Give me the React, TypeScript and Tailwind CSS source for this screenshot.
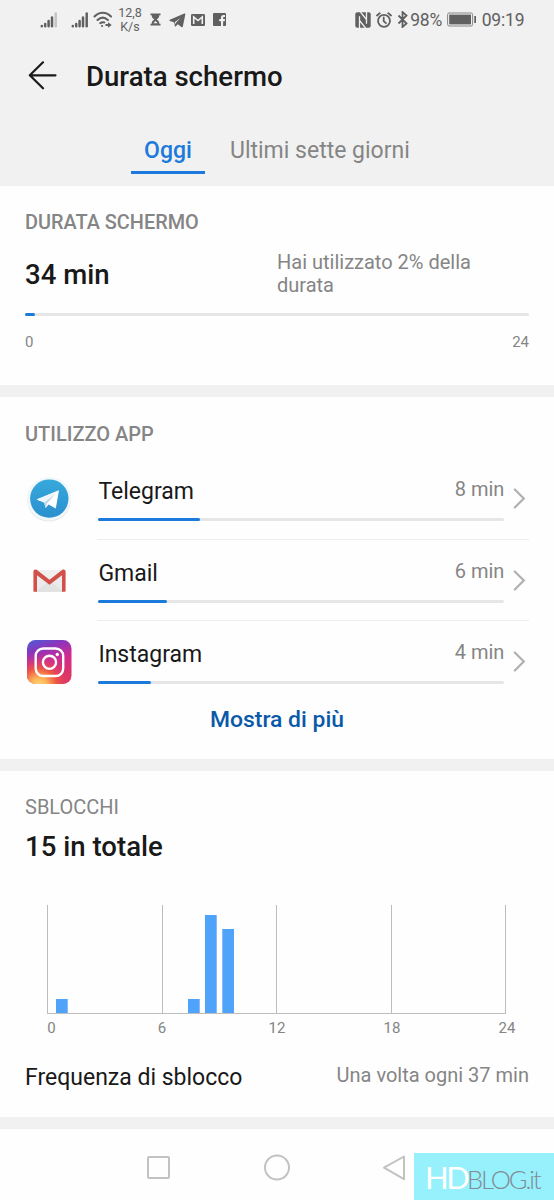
import React from 'react';

interface AppUsage {
  name: string;
  minutes: number;
  percent: number;
  icon: React.ReactNode;
}

interface UnlockBar {
  x: number;
  height: number;
}

const TelegramIcon = () => (
  <svg width="46" height="46" viewBox="0 0 46 46">
    <defs>
      <linearGradient id="tg" x1="0" y1="0" x2="0" y2="1">
        <stop offset="0" stopColor="#37a9dc" />
        <stop offset="1" stopColor="#2b8fce" />
      </linearGradient>
    </defs>
    <circle cx="23" cy="23.6" r="22" fill="#e6eaed" />
    <circle cx="23" cy="22.8" r="21.7" fill="#f2f7fa" />
    <circle cx="23.3" cy="22.6" r="19.2" fill="url(#tg)" />
    <path d="M10.6 23.4 33 14.2 29.8 32.6 22.6 28.4 19.6 32 18.2 26.6Z" fill="#fff" />
    <path d="M10.6 23.4 33 14.2 18.2 26.6Z" fill="#eef5fb" />
    <path d="M18.2 26.6 29.5 17.8 21 27.4 19.6 32Z" fill="#c3d5e6" />
  </svg>
);

const GmailIcon = () => (
  <svg width="46" height="46" viewBox="0 0 46 46">
    <path d="M9 12h29v22H9z" fill="#ebebeb" />
    <path d="M9 34 23.5 23 38 34z" fill="#e2e2e2" />
    <path d="M9 12h29L23.5 24z" fill="#f0efef" />
    <path d="M8 13.500v20.300h3V17.200l12.500 9.500L36 17.200v16.600h2.600c.6 0 1-.4 1-1V14c0-2.200-2-3-3.600-1.900l-12.500 9.700L11 12.100C9.400 11 7.400 11.800 7.400 14v18.800c0 .6.4 1 1 1z" fill="#d2504a" />
  </svg>
);

const InstagramIcon = () => (
  <svg width="46" height="46" viewBox="0 0 46 46">
    <defs>
      <linearGradient id="igBase" x1="0" y1="0" x2="0.35" y2="1">
        <stop offset="0" stopColor="#4a5fd7" />
        <stop offset="0.28" stopColor="#8a35bd" />
        <stop offset="0.6" stopColor="#cf2c91" />
        <stop offset="1" stopColor="#dd3563" />
      </linearGradient>
      <radialGradient id="igGlow" cx="0.27" cy="1.05" r="0.75">
        <stop offset="0" stopColor="#ffdc80" />
        <stop offset="0.25" stopColor="#fdb457" />
        <stop offset="0.55" stopColor="#f0583f" stopOpacity="0.9" />
        <stop offset="1" stopColor="#d92e7f" stopOpacity="0" />
      </radialGradient>
    </defs>
    <rect x="1" y="1" width="44.500" height="44" rx="8.500" fill="url(#igBase)" />
    <rect x="1" y="1" width="44.500" height="44" rx="8.500" fill="url(#igGlow)" />
    <rect x="9.700" y="9.500" width="27.500" height="27.500" rx="7.500" fill="none" stroke="#fff" strokeWidth="2.400" />
    <circle cx="23.500" cy="23.300" r="6.600" fill="none" stroke="#fff" strokeWidth="2.400" />
    <circle cx="31.300" cy="15.500" r="1.700" fill="#fff" />
  </svg>
);

const apps: AppUsage[] = [
  { name: 'Telegram', minutes: 8, percent: 25, icon: <TelegramIcon /> },
  { name: 'Gmail', minutes: 6, percent: 17, icon: <GmailIcon /> },
  { name: 'Instagram', minutes: 4, percent: 13, icon: <InstagramIcon /> },
];

const unlocks: UnlockBar[] = [
  { x: 9, height: 14 },
  { x: 141, height: 14 },
  { x: 158, height: 98 },
  { x: 175.3, height: 84 },
];

const hours = [0, 6, 12, 18, 24];

const Signal: React.FC<{ weak?: boolean }> = ({ weak }) => (
  <svg className="mb-px" width="18" height="16" viewBox="0 0 18 16" fill="none" stroke="#606060" strokeWidth="2.5" strokeLinecap="round">
    <path d="M1.800 14v.2M5.200 12v2.200M8.600 9v5.200M12 5.500v8.700" />
    <path d="M15.700 1.500v12.700" stroke={weak ? '#c4c4c4' : '#606060'} />
  </svg>
);

const StatusBar = () => (
  <div className="flex h-10 items-center pl-10 text-[#606060]">
    <Signal weak />
    <div className="w-[13px]" />
    <Signal />
    <svg className="mb-[3px] ml-1" width="20" height="18" viewBox="0 0 20 18" fill="none" stroke="#606060" strokeWidth="2.1" strokeLinecap="round">
      <path d="M1.500 6.500C6.500 1.500 13 1.500 18 6.500M4.500 10c3.200-3 7.200-3 10.400 0M7.300 13.200c1.300-1 2.700-1.200 4-.8" />
      <path d="M9 16h.2M13.200 15h2.500" strokeWidth="1.900" />
      <path d="m15 12.200 3.700 2.800-3.700 2.700z" fill="#606060" stroke="none" />
    </svg>
    <div className="ml-[5px] w-6 text-center text-[12.500px] leading-[14px]">
      12,8
      <br />
      K/s
    </div>
    <svg className="mb-px ml-2" width="11" height="13" viewBox="0 0 11 13" fill="#606060">
      <path d="M.5.5h10v1.800H9.300c0 2.500-1.300 3.400-2.600 4.200 1.300.8 2.600 1.700 2.600 4.200h1.200v1.800H.5v-1.800h1.200c0-2.500 1.300-3.400 2.600-4.200C3 5.700 1.700 4.800 1.700 2.300H.5z" />
      <path d="M3.300 10.300 5.500 8l2.200 2.300z" fill="#f1f1f1" />
    </svg>
    <svg className="ml-2" width="17" height="15" viewBox="0 0 17 15" fill="#606060">
      <path d="M.8 6.800 15.300.5c.8-.3 1.200.1 1 .9l-2.400 11.900c-.2.900-.8 1.100-1.500.6L8.800 11.200l-1.900 2.100c-.5.500-1 .3-1.100-.4L5.300 9.400 1 8C.3 7.700.2 7.300.8 6.800z" />
      <path d="m5.900 9 5.600-4.100-4.600 4.900-.5 1.600z" fill="#f1f1f1" />
    </svg>
    <svg className="ml-[5px]" width="14" height="12" viewBox="0 0 14 12">
      <rect width="14" height="12" rx="1.200" fill="#606060" />
      <path d="M2.700 10V3L7 6.500 11.300 3v7" fill="none" stroke="#f1f1f1" strokeWidth="1.600" />
    </svg>
    <svg className="mb-px ml-2" width="13" height="13" viewBox="0 0 13 13">
      <rect width="13" height="13" rx="1" fill="#606060" />
      <path d="M8 13V8.200H6.300V6.100H8V4.500c0-1.600.9-2.500 2.400-2.500H12v2h-1c-.6 0-.9.300-.9.800v1.300H12l-.3 2.100h-1.600V13z" fill="#f1f1f1" />
    </svg>

    <svg className="mb-px ml-auto" width="16" height="16" viewBox="0 0 16 16">
      <rect x=".3" y=".3" width="15.400" height="15.400" rx="2" fill="#606060" />
      <path d="M4.500 16V4.200M11.500 0v11.800" stroke="#f1f1f1" strokeWidth="1.300" />
      <path d="m4.500 8.500 6 7.500M5.500 0l6 7.500" fill="none" stroke="#f1f1f1" strokeWidth="1.300" />
    </svg>
    <svg className="mb-px ml-[5px]" width="16" height="16" viewBox="0 0 16 16" fill="none" stroke="#606060" strokeWidth="1.800" strokeLinecap="round">
      <circle cx="8" cy="8.800" r="6" />
      <path d="M7.700 5.500v3.700l2.200 2M1 3.500 3.700 1.200M15 3.500l-2.700-2.300" />
    </svg>
    <svg className="mb-px ml-[5px]" width="12" height="17" viewBox="0 0 12 17" fill="none" stroke="#606060" strokeWidth="1.800">
      <path d="m1.500 4.500 8 8-4 3.500V1l4 3.500-8 8" />
    </svg>
    <span className="ml-[1.500px] w-[32.500px] text-[17.500px] tracking-[-0.200px]">98%</span>
    <svg className="mb-px ml-1" width="30" height="15" viewBox="0 0 30 15">
      <rect x=".6" y="1" width="25" height="13" rx="1.500" fill="none" stroke="#858585" />
      <rect x="2.200" y="2.600" width="21.800" height="9.800" fill="#606060" />
      <path d="M27.300 4h1.700v7h-1.700z" fill="#606060" />
    </svg>
    <span className="mr-[29.500px] ml-[5px] text-[17.500px] tracking-[-0.150px]">09:19</span>
  </div>
);

const Header = () => (
  <header className="h-[146px] bg-[#f1f1f1]">
    <div className="flex h-[72px] items-center pl-7">
      <svg width="30" height="30" viewBox="0 0 30 30" fill="none" stroke="#1a1a1a" strokeWidth="2.2" strokeLinecap="round" strokeLinejoin="round">
        <path d="M27.500 14.300H2M15 1.300 1.800 14.300 15 27.300" />
      </svg>
      <h1 className="ml-7 pt-0.5 text-[27.600px] font-medium text-[#191919]">Durata schermo</h1>
    </div>
    <nav className="flex h-[62px] pl-[131px] text-[23px] leading-[78px]">
      <div className="h-[62px] w-[74px] border-b-[3px] border-[#1b7adb] text-center font-medium text-[#1b7adb]">Oggi</div>
      <div className="ml-[25px] text-[#858585]">Ultimi sette giorni</div>
    </nav>
  </header>
);

const UsageRow: React.FC<{ app: AppUsage; last: boolean }> = ({ app, last }) => (
  <div className="flex h-[81.500px]">
    <div className="w-[72.400px] pt-[18px] pl-px">{app.icon}</div>
    <div className={'flex flex-1 ' + (last ? '' : 'border-b border-[#ededed]')}>
      <div className="w-[407px] shrink-0 pl-px">
        <div className="flex justify-between">
          <span className="pt-[18px] text-[23px] leading-8 text-[#191919]">{app.name}</span>
          <span className="pt-[15px] text-[20px] leading-8 text-[#858585]">{app.minutes} min</span>
        </div>
        <div className="mt-2.5 h-[3px] rounded-full bg-[#e6e6e6]">
          <div className="h-[3px] rounded-full bg-[#1b7adb]" style={{ width: app.percent + '%' }} />
        </div>
      </div>
      <svg className="mt-[30px] ml-[8.500px] shrink-0" width="13" height="21" viewBox="0 0 13 21" fill="none" stroke="#b0b0b0" strokeWidth="2.2" strokeLinecap="round">
        <path d="m1.800 1.500 9 9-9 9" />
      </svg>
    </div>
  </div>
);

const UnlockChart = () => (
  <div className="mt-[42px] ml-[22px] w-[460px]">
    <svg className="block" width="460" height="109" viewBox="0 0 460 109">
      {unlocks.map((bar) => (
        <rect key={bar.x} x={bar.x} y={108 - bar.height} width="11.700" height={bar.height} fill="#4fa3fa" />
      ))}
      {hours.map((h) => (
        <path key={h} d={`M${0.5 + Math.round(h * 19.1)} 0v108`} stroke="#bdbdbd" />
      ))}
      <path d="M0 108.500h459" stroke="#bdbdbd" />
    </svg>
    <div className="-mx-5 flex justify-between text-[15px] leading-7 text-[#858585]">
      {hours.map((h) => (
        <span key={h} className={'w-10 text-center ' + (h === 0 ? 'pl-[9px]' : '')}>{h}</span>
      ))}
    </div>
  </div>
);

const NavBar = () => (
  <footer className="flex h-[71px] bg-[#fefefe]">
    <svg className="mt-[25px] ml-[145px] shrink-0" width="264" height="28" viewBox="0 0 264 28" fill="none" stroke="#c2c2c2" strokeWidth="2" strokeLinejoin="round">
      <rect x="3" y="3" width="21" height="21" rx="1" />
      <circle cx="132" cy="13.500" r="12" />
      <path d="M259 2.500v22.700L239 13.700z" />
    </svg>
    <div className="mt-6 ml-[5px] flex h-[47px] w-[140px] shrink-0 items-baseline bg-[#96f1fc] pl-[11px] font-['Lato',sans-serif] leading-[48px]">
      <span className="w-[42px] text-[31px] tracking-[-2.500px] text-white">HD</span>
      <span className="text-[25.500px] font-light tracking-[-2.100px] text-[#808b94]">BLOG.it</span>
    </div>
  </footer>
);

const App = () => {
  return (
    <div className="h-[1200px] w-[554px] overflow-hidden bg-[#f1f1f1] font-['Roboto',sans-serif]">
      <StatusBar />
      <Header />

      <section className="h-[199px] bg-[#fefefe] px-[25px] pt-[25px]">
        <h2 className="text-[19.900px] leading-6 font-medium text-[#858585]">DURATA SCHERMO</h2>
        <div className="mt-[15px] flex h-12 items-center">
          <div className="w-[252px] pt-px text-[27.600px] font-medium text-[#191919]">34 min</div>
          <div className="w-[220px] text-[20px] leading-[23.500px] text-[#858585]">Hai utilizzato 2% della durata</div>
        </div>
        <div className="mt-[15px] h-[3px] rounded-full bg-[#e6e6e6]">
          <div className="h-[3px] w-2.5 rounded-full bg-[#1b7adb]" />
        </div>
        <div className="mt-[15px] flex justify-between text-[15px] leading-[22px] text-[#858585]">
          <span>0</span>
          <span>24</span>
        </div>
      </section>

      <section className="mt-3 h-[362px] bg-[#fefefe] px-[25px] pt-[25px]">
        <h2 className="text-[20px] leading-6 font-medium text-[#858585]">UTILIZZO APP</h2>
        <div className="mt-3">
          {apps.map((app, i) => (
            <UsageRow key={app.name} app={app} last={i === apps.length - 1} />
          ))}
        </div>
        <button className="block w-full pt-px text-center text-[22.900px] leading-8 font-medium text-[#0a59a8]">Mostra di più</button>
      </section>

      <section className="mt-3 h-[346px] bg-[#fefefe] px-[25px] pt-6">
        <h2 className="text-[20px] leading-[25px] text-[#858585]">SBLOCCHI</h2>
        <div className="mt-[11px] text-[27.600px] leading-8 font-medium text-[#191919]">15 in totale</div>
        <UnlockChart />
        <div className="mt-[19px] flex justify-between">
          <span className="pt-px text-[23px] leading-8 text-[#191919]">Frequenza di sblocco</span>
          <span className="text-[20px] leading-7 text-[#858585]">Una volta ogni 37 min</span>
        </div>
      </section>

      <div className="h-3" />
      <NavBar />
    </div>
  );
};

export default App;
